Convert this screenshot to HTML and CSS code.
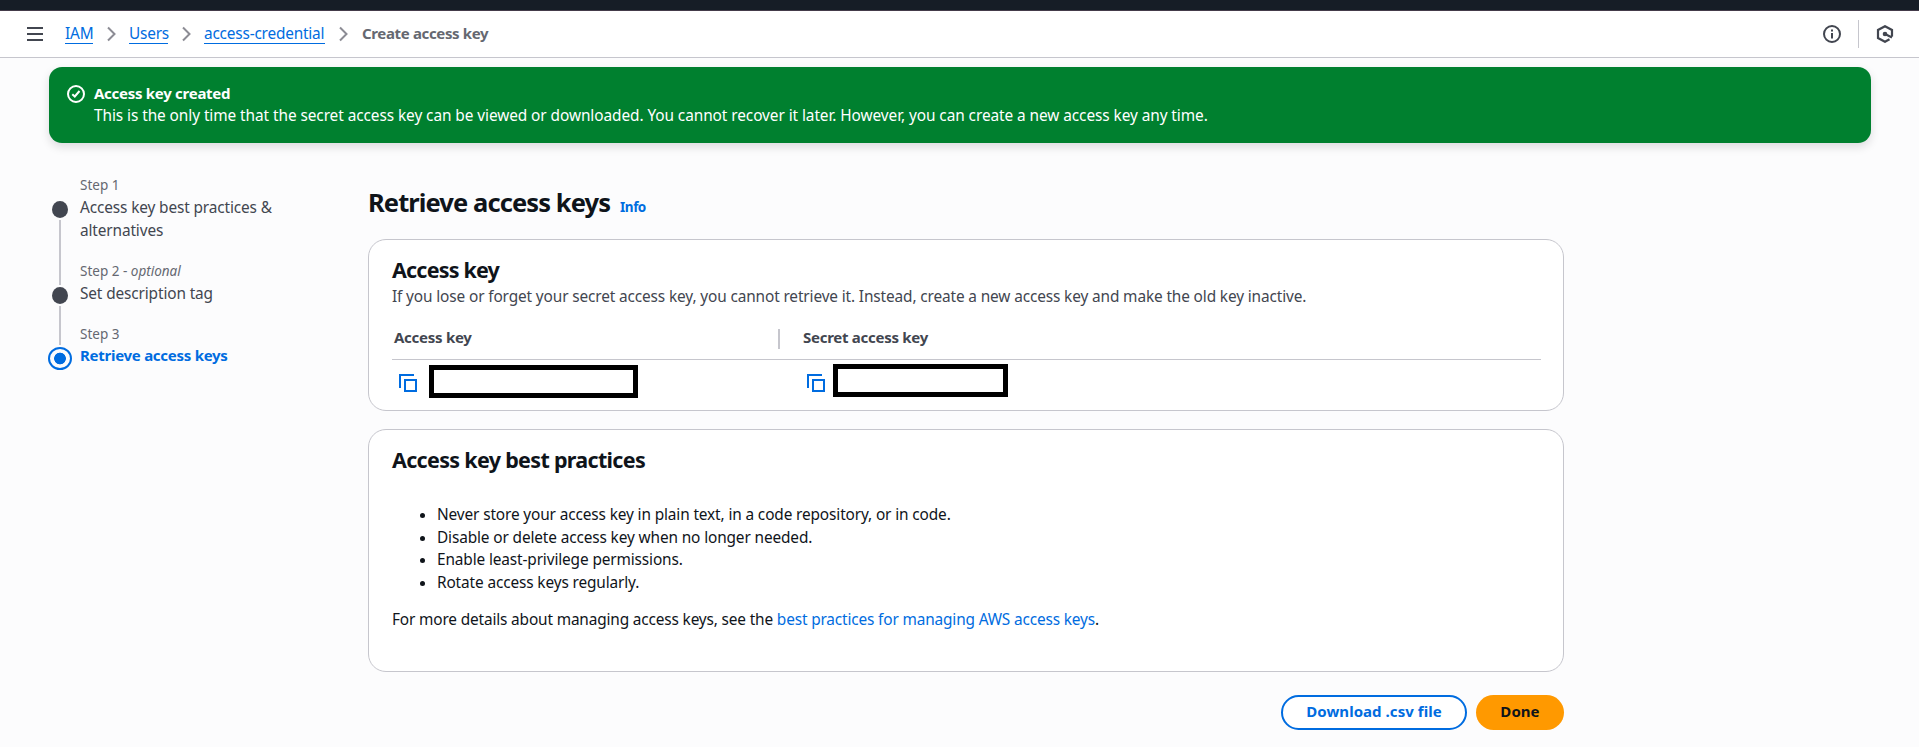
FILE: index.html
```html
<!DOCTYPE html>
<html lang="en">
<head>
<meta charset="utf-8">
<title>Create access key | IAM</title>
<link rel="stylesheet" href="styles.css">
</head>
<body>
<div class="global-bar"></div>
<header class="nav">
  <svg class="menu" width="16" height="16" viewBox="0 0 16 16"><path d="M0 2h16M0 8h16M0 14h16"/></svg>
  <nav class="crumbs">
    <a class="crumb c-iam" href="#">IAM</a>
    <svg class="chev" width="10" height="16" viewBox="0 0 10 16"><path d="M1 1.500l6.500 6.500L1 14.500"/></svg>
    <a class="crumb c-users" href="#">Users</a>
    <svg class="chev" width="10" height="16" viewBox="0 0 10 16"><path d="M1 1.500l6.500 6.500L1 14.500"/></svg>
    <a class="crumb c-cred" href="#">access-credential</a>
    <svg class="chev" width="10" height="16" viewBox="0 0 10 16"><path d="M1 1.500l6.500 6.500L1 14.500"/></svg>
    <span class="current">Create access key</span>
  </nav>
  <div class="tools">
    <svg width="18" height="18" viewBox="0 0 18 18"><circle cx="9" cy="9" r="8" fill="none" stroke="#424650" stroke-width="2"/><path d="M9 4.500v2M9 8v5.500" stroke="#424650" stroke-width="2"/></svg>
    <span class="rule"></span>
    <svg width="18" height="18" viewBox="0 0 18 18"><path d="M16 11.500V5L9 1.200 2 5v8l7 3.800 4.500-2.500M9 9l7 3.500" fill="none" stroke="#424650" stroke-width="2.200"/><circle cx="9" cy="9" r="2.300" fill="#424650"/></svg>
  </div>
</header>
<section class="flash">
  <svg width="18" height="18" viewBox="0 0 18 18" fill="none" stroke="#fff" stroke-width="2"><circle cx="9" cy="9" r="8"/><path d="M5.300 9.200l2.500 2.300L12.500 6"/></svg>
  <div>
    <div class="flash-title">Access key created</div>
    <div class="flash-body">This is the only time that the secret access key can be viewed or downloaded. You cannot recover it later. However, you can create a new access key any time.</div>
  </div>
</section>
<div class="layout">
  <aside class="steps">
    <div class="rail"><i class="dot"></i><i class="line long"></i><i class="dot"></i><i class="line"></i><i class="ring"></i></div>
    <ol class="step-list">
      <li><div class="step-no">Step 1</div><div class="step-name">Access key best practices &amp;<br>alternatives</div></li>
      <li><div class="step-no">Step 2 - <em>optional</em></div><div class="step-name">Set description tag</div></li>
      <li><div class="step-no">Step 3</div><div class="step-name active">Retrieve access keys</div></li>
    </ol>
  </aside>
  <main>
    <div class="heading"><h1>Retrieve access keys</h1><a class="info" href="#">Info</a></div>
    <section class="card keys">
      <h2 class="h-key">Access key</h2>
      <p class="desc">If you lose or forget your secret access key, you cannot retrieve it. Instead, create a new access key and make the old key inactive.</p>
      <div class="table">
        <div class="th first">Access key</div>
        <div class="th">Secret access key</div>
        <div class="td">
          <svg class="copy" width="18" height="18" viewBox="0 0 18 18"><path d="M15 1H1v13M6 6h11v11H6z"/></svg>
          <span class="mask mask-a"></span>
        </div>
        <div class="td">
          <svg class="copy" width="18" height="18" viewBox="0 0 18 18"><path d="M15 1H1v13M6 6h11v11H6z"/></svg>
          <span class="mask mask-b"></span>
        </div>
      </div>
    </section>
    <section class="card practices">
      <h2>Access key best practices</h2>
      <ul>
        <li>Never store your access key in plain text, in a code repository, or in code.</li>
        <li>Disable or delete access key when no longer needed.</li>
        <li>Enable least-privilege permissions.</li>
        <li>Rotate access keys regularly.</li>
      </ul>
      <p class="more">For more details about managing access keys, see the <a href="#">best practices for managing AWS access keys</a>.</p>
    </section>
    <div class="actions">
      <button class="btn download">Download .csv file</button>
      <button class="btn done">Done</button>
    </div>
  </main>
</div>
</body>
</html>
```
FILE: styles.css
```css
* { box-sizing: border-box; }
body {
  margin: 0;
  height: 747px;
  overflow: hidden;
  background: #fcfcfd;
  color: #0f141a;
  font: 15.400px/22px "Noto Sans", "Open Sans", sans-serif;
  letter-spacing: -0.130px;
  white-space: nowrap;
}
a { color: #006ce0; text-decoration: none; }
h1, h2, p, ul, ol { margin: 0; padding: 0; }

.global-bar { height: 11px; background: #161d26; border-bottom: 1px solid #443b4a; }
.nav {
  height: 47px;
  display: flex;
  align-items: center;
  padding: 0 25px 0 27px;
  background: #fff;
  border-bottom: 1px solid #c6c6cd;
}
.menu { stroke: #424650; stroke-width: 2; margin-right: 22px; }
.crumbs { display: flex; align-items: center; flex: 1; }
.crumb { line-height: 19px; border-bottom: 1px solid #006ce0; letter-spacing: -0.200px; }
.c-iam { width: 28px; }
.c-users { width: 39px; }
.c-cred { width: 121px; }
.chev { fill: none; stroke: #8c8c94; stroke-width: 2; margin: 0 12px 0 14px; }
.current { color: #656871; font-size: 15px; font-weight: 700; letter-spacing: -0.350px; margin: -2px 0 0 1px; }
.tools { display: flex; align-items: center; gap: 17px; }
.rule { width: 1px; height: 28px; background: #c6c6cd; }

.flash {
  margin: 9px 48px 0 49px;
  height: 76px;
  padding: 15px 18px;
  display: flex;
  gap: 9px;
  border-radius: 13px;
  background: #00802f;
  color: #fff;
  box-shadow: 0 4px 10px rgba(0, 7, 22, .13);
}
.flash svg { margin-top: 3px; }
.flash-title { font-size: 15px; font-weight: 700; letter-spacing: -0.280px; }
.flash-body { margin-top: 1px; letter-spacing: -0.075px; }

.layout { display: grid; grid-template-columns: 320px 1196px; padding-left: 48px; }
.steps { display: flex; gap: 9px; padding-top: 32px; }
.rail { width: 24px; padding-top: 26px; display: flex; flex-direction: column; align-items: center; gap: 2px; }
.dot { width: 16px; height: 17px; border-radius: 50%; background: #424650; }
.line { width: 2px; height: 39px; background: #c6c6cd; }
.long { height: 65px; }
.ring { width: 24px; height: 23px; border-radius: 50%; border: 2px solid #006ce0; background: radial-gradient(circle, #006ce0 5.500px, transparent 6.200px); }
.step-list { list-style: none; display: flex; flex-direction: column; gap: 19px; margin-left: -1px; }
.step-no { font-size: 13.500px; line-height: 20px; margin-bottom: 1px; color: #656871; letter-spacing: 0; }
.step-name { line-height: 23px; color: #424650; }
.step-name.active { color: #006ce0; font-size: 15px; font-weight: 700; letter-spacing: -0.270px; margin-top: -1px; }

main { padding-top: 43px; }
.heading { display: flex; align-items: baseline; gap: 10px; height: 53px; }
h1 { font-size: 25.500px; line-height: 32px; letter-spacing: -0.900px; }
.info { font-size: 13.500px; font-weight: 700; letter-spacing: -0.500px; }
.card { background: #fff; border: 1px solid #c6c6cd; border-radius: 18px; padding: 16px 22px 0 23px; }
h2 { font-size: 21.500px; line-height: 27px; letter-spacing: -0.680px; }
.h-key { letter-spacing: -0.800px; }
.keys { height: 172px; margin-bottom: 18px; }
.desc { margin-top: 3px; color: #424650; }
.table { margin-top: 18px; display: grid; grid-template-columns: 388px 1fr; grid-template-rows: 34px 50px; }
.th { padding-left: 2px; border-bottom: 1px solid #c6c6cd; color: #424650; font-size: 15px; font-weight: 700; letter-spacing: -0.270px; display: flex; justify-content: space-between; }
.th + .th { padding-left: 23px; }
.first::after { content: ""; width: 2px; height: 20px; margin-top: 3px; background: #c6c6cd; }
.td { display: flex; align-items: flex-start; padding-left: 7px; }
.td + .td { padding-left: 27px; }
.copy { margin-top: 14px; fill: none; stroke: #006ce0; stroke-width: 2; }
.mask { height: 33px; border: 5px solid #000; }
.mask-a { width: 209px; margin: 5px 0 0 12px; }
.mask-b { width: 175px; margin: 4px 0 0 8px; }

.practices { height: 243px; }
.practices ul { margin: 31px 0 15px; padding-left: 45px; line-height: 22.500px; }
.more { letter-spacing: -0.155px; }
.actions { display: flex; justify-content: flex-end; gap: 9px; margin-top: 23px; }
.btn { height: 35px; border-radius: 18px; font: 700 15px/20px "Noto Sans", "Open Sans", sans-serif; letter-spacing: 0.050px; padding: 0 0 3px; }
.download { width: 186px; background: #fff; border: 2px solid #006ce0; color: #006ce0; }
.done { width: 88px; border: 0; background: #ff9900; color: #0f141a; }
```
